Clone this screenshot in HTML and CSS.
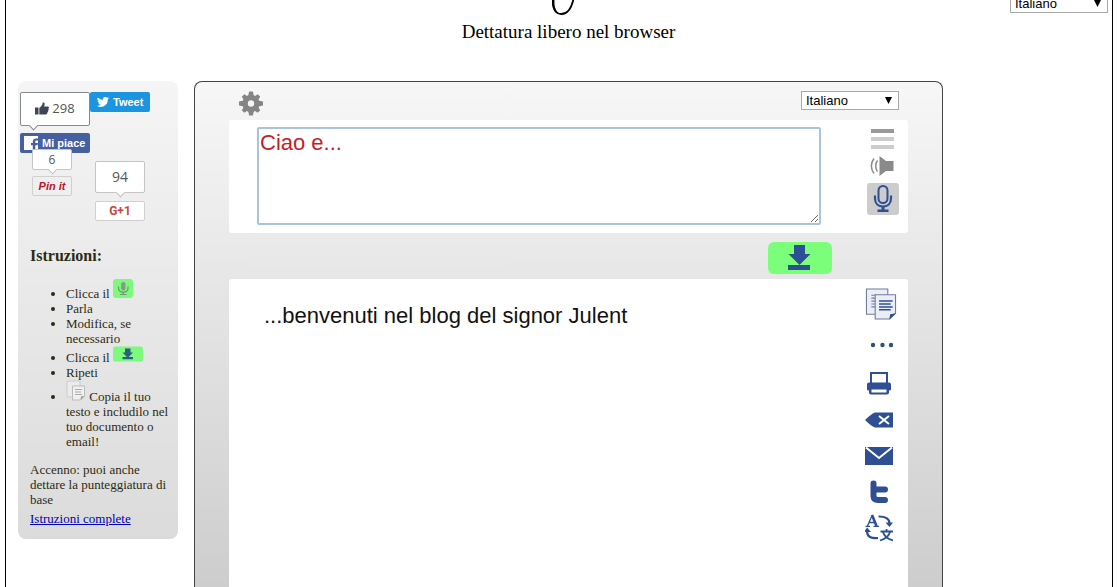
FILE: index.html
```html
<!DOCTYPE html>
<html lang="it">
<head>
<meta charset="utf-8">
<title>Dettatura libero nel browser</title>
<link rel="stylesheet" href="styles.css">
</head>
<body>
<svg class="sprite" aria-hidden="true">
  <symbol id="mic" viewBox="0 0 20 30">
    <rect x="5.5" y="2" width="9" height="17" rx="4.5" fill="none" stroke="currentColor" stroke-width="2"/>
    <path d="M2 11.500v3c0 5 3.500 8 8 8s8-3 8-8v-3" fill="none" stroke="currentColor" stroke-width="2.200"/>
    <path d="M8.500 22h3v3.500h4v2.500h-11v-2.500h4z" fill="currentColor"/>
  </symbol>
  <symbol id="down" viewBox="0 0 24 26">
    <path d="M7 0h11v9h5.500L12.500 20 1.500 9H7zM1 20h22v5H1z" fill="currentColor"/>
  </symbol>
  <symbol id="pages" viewBox="0 0 32 33">
    <path d="M1 1h22v26H1z" fill="#eceef6" stroke="#73789c" stroke-width="1.100"/>
    <path d="M6 7.500h6M6 10.500h6M6 13.500h6M6 16.500h6M6 19.500h6" stroke="#6f7db0" stroke-width="1.200"/>
    <path d="M10 7h21v19l-6 6H10z" fill="#eceef6" stroke="#73789c" stroke-width="1.100"/>
    <path d="M14 13.500h14M14 16.500h12M14 19.500h14M14 22.500h12" stroke="currentColor" stroke-width="1.600"/>
    <path d="M24.500 32.500l1-5.500 6-1z" fill="currentColor"/>
  </symbol>
</svg>
<div class="frame">
  <header class="top">
    <div class="top-logo">
      <svg class="logo" viewBox="0 0 24 16" aria-hidden="true"><path d="M2 -1C1.500 8 4 14 10.500 14c6 0 10-6 12-15" fill="none" stroke="#000" stroke-width="1.800"/><path d="M1 0c-.3 6 1 10 4 13l1-1.500C4 9 3 5 3.500 0z"/></svg>
    </div>
    <select class="lang" aria-label="Lingua del sito"><option>Italiano</option></select>
    <p class="tagline">Dettatura libero nel browser</p>
  </header>
  <div class="columns">
    <aside class="side">
      <div class="social">
        <div class="social-row">
          <div class="fb">
            <div class="count fb-count"><svg class="thumb" viewBox="0 0 14 13" aria-hidden="true"><path d="M0 5.500h3.500v7H0zM4.300 6C6.500 4.500 7.500 3 7.700.6c2-.8 2.600 1.400 1.300 4H13c1.200.2 1.200 1.500.4 2 .6.700.3 1.600-.4 1.900.4.800 0 1.500-.6 1.700.2 1-.4 2.200-1.400 2.200H4.300z"/></svg>298</div>
            <button class="fb-button" type="button"><svg class="fb-logo" viewBox="0 0 14 14" aria-hidden="true"><path d="M0 0h14v2.500h-1.500c-2.500 0-3.700 1-3.700 3V7H7v2.300h1.800V14H0zM11.300 14V9.300h2.200L14 7h-2.700V5.800c0-.8.400-1.200 1.300-1.200H14V14z" fill="#fff"/></svg>Mi piace</button>
          </div>
          <button class="tweet" type="button"><svg class="bird" viewBox="0 0 24 20" aria-hidden="true"><path d="M24 2.400a10 10 0 0 1-2.800.8A5 5 0 0 0 23.300.5a10 10 0 0 1-3.100 1.200 4.900 4.900 0 0 0-8.400 4.500A14 14 0 0 1 1.700 1 4.900 4.900 0 0 0 3.200 7.600 5 5 0 0 1 1 7v.1a4.900 4.900 0 0 0 3.900 4.800 5 5 0 0 1-2.200.1 4.900 4.900 0 0 0 4.600 3.400A10 10 0 0 1 0 17.500 14 14 0 0 0 21.500 5a10 10 0 0 0 2.500-2.600z" fill="#fff"/></svg>Tweet</button>
        </div>
        <div class="social-row second">
          <div class="pin">
            <div class="count pin-count">6</div>
            <button class="pin-button" type="button">Pin it</button>
          </div>
          <div class="plus">
            <div class="count plus-count">94</div>
            <button class="plus-button" type="button">G+1</button>
          </div>
        </div>
      </div>
      <h2 class="side-title">Istruzioni:</h2>
      <ul class="steps">
        <li>Clicca il <svg class="chip chip-mic" viewBox="0 0 20 19" aria-hidden="true"><rect width="20" height="19" rx="3" fill="#7cfa7c"/><rect x="8" y="3" width="4.500" height="8.500" rx="2.200" fill="#8a9a8a"/><path d="M5.500 7.500v1.500c0 5.500 9.500 5.500 9.500 0V7.500M10.200 13v2.500M7 15.500h6.500" fill="none" stroke="#779077" stroke-width="1.200"/></svg></li>
        <li>Parla</li>
        <li>Modifica, se necessario</li>
        <li>Clicca il <svg class="chip chip-down" viewBox="0 0 30 15" aria-hidden="true"><rect width="30" height="15" rx="2.500" fill="#7cfa7c"/><path d="M12 2h5.500v4H20l-5.200 5.500L9.500 6H12zM9.500 10.500h10.500v2.200H9.500z" fill="#2f5d80"/></svg></li>
        <li>Ripeti</li>
        <li><svg class="chip chip-pages" viewBox="0 0 20 20" aria-hidden="true"><path d="M1 .5h13v16H1z" fill="#ebebeb" stroke="#ccc"/><path d="M6.500 5.500h12v10l-4 4h-8z" fill="#f0f0f0" stroke="#bbb"/><path d="M9 9h7M9 11.500h6M9 14h7" stroke="#aaa"/><path d="M14.500 19.500l.5-3.500 3.500-.5z" fill="#999"/></svg> Copia il tuo testo e includilo nel tuo documento o email!</li>
      </ul>
      <p class="hint">Accenno: puoi anche dettare la punteggiatura di base</p>
      <a class="more" href="#istruzioni">Istruzioni complete</a>
    </aside>
    <main class="panel">
      <div class="bar">
        <button class="icon-button" type="button" aria-label="Impostazioni"><svg class="gear" viewBox="-13 -13 26 26" aria-hidden="true"><g fill="#858585"><path fill-rule="evenodd" d="M0-9a9 9 0 1 0 0 18a9 9 0 1 0 0-18zM0-3.300a3.300 3.300 0 1 1 0 6.600a3.300 3.300 0 1 1 0-6.600z"/><g id="teeth"><path d="M-2-12.500h4l1 5h-6zM-2 12.500h4l1-5h-6zM-12.500-2v4l5 1v-6zM12.500-2v4l-5 1v-6z"/></g><use href="#teeth" transform="rotate(45) scale(.94)"/></g></svg></button>
        <select class="lang" aria-label="Lingua di dettatura"><option>Italiano</option></select>
      </div>
      <section class="dictate">
        <textarea class="speech" aria-label="Testo dettato">Ciao e...</textarea>
        <div class="tools">
          <button class="icon-button" type="button" aria-label="Menu"><svg class="menu" viewBox="0 0 24 20" aria-hidden="true"><path d="M0 0h23v4H0z" fill="#999"/><path d="M0 8h23v4H0zM0 16h23v4H0z" fill="#ccc"/></svg></button>
          <button class="icon-button" type="button" aria-label="Ascolta"><svg class="menu" viewBox="0 0 24 20" aria-hidden="true"><path d="M8.500 0v20l6.500-5h7.500V5H15z" fill="#8a8a8a"/><path d="M6.500 4.500c-2.400 3-2.400 8 0 11M3 2.500c-3.500 4.500-3.500 10.500 0 15" fill="none" stroke="#8a8a8a" stroke-width="1.500"/></svg></button>
          <button class="icon-button mic-button" type="button" aria-label="Microfono"><svg class="mic" aria-hidden="true"><use href="#mic"/></svg></button>
        </div>
      </section>
      <div class="transfer">
        <button class="icon-button transfer-button" type="button" aria-label="Trasferisci il testo"><svg class="down" aria-hidden="true"><use href="#down"/></svg></button>
      </div>
      <section class="result">
        <p class="result-text">...benvenuti nel blog del signor Julent</p>
        <div class="actions">
          <button class="icon-button" type="button" aria-label="Copia"><svg class="copy" aria-hidden="true"><use href="#pages"/></svg></button>
          <button class="icon-button dots" type="button" aria-label="Altro"><svg class="act" viewBox="0 0 28 28" aria-hidden="true"><g fill="#2f4f7c"><circle cx="8" cy="14" r="2.200"/><circle cx="17.500" cy="14" r="2.200"/><circle cx="26" cy="14" r="2.200"/></g></svg></button>
          <button class="icon-button" type="button" aria-label="Stampa"><svg class="act" viewBox="0 0 28 28" aria-hidden="true"><path d="M6 14V3h16v11" fill="none" stroke="currentColor" stroke-width="2"/><path fill-rule="evenodd" d="M4 12.500h20q2 0 2 2v5q0 1-2 1v2q0 2-2 2H6q-2 0-2-2v-2q-2 0-2-1v-5q0-2 2-2zM6.500 19.500v3h15v-3z" fill="currentColor"/></svg></button>
          <button class="icon-button" type="button" aria-label="Cancella"><svg class="act" viewBox="0 0 28 28" aria-hidden="true"><path d="M0 14q6-6 10-7.500h18v15H10Q6 20 0 14z" fill="currentColor"/><path d="M14 10l10 8M24 10l-10 8" stroke="#fff" stroke-width="2"/></svg></button>
          <button class="icon-button" type="button" aria-label="Email"><svg class="act" viewBox="0 0 28 28" aria-hidden="true"><path d="M0 5h28v18H0z" fill="currentColor"/><path d="M1 5.500l13 10.500L27 5.500" fill="none" stroke="#fff" stroke-width="2"/></svg></button>
          <button class="icon-button" type="button" aria-label="Twitter"><svg class="act" viewBox="0 0 28 28" aria-hidden="true"><path d="M8.500 5.500V18q0 4 4.500 4h7M9 11.500h11" fill="none" stroke="currentColor" stroke-width="6" stroke-linecap="round"/></svg></button>
          <button class="icon-button" type="button" aria-label="Traduci"><svg class="act" viewBox="0 0 28 28" aria-hidden="true"><g fill="none" stroke="currentColor"><path d="M2.500 12L7 1.500M4 8.500h6" stroke-width="1.300"/><path d="M7 1l4.500 11" stroke-width="2.600"/><path d="M.5 12.300h4.500M8.500 12.300h5.500" stroke-width="1.300"/><path d="M13.500 2.500c7 0 11 1.500 11 7M2 17c0 6 4 7.500 11 7" stroke-width="2.200"/><path d="M15.500 17.500h12.500M21.500 15v2.500M18 18c1 4 5 7 10 8.500M25 18c-1 4-5 7-10 8.500" stroke-width="1.800"/></g><path d="M20.500 8.500h7.500l-3.500 4.500zM-1 18l3-4.500 4 4.500z" fill="currentColor"/></svg></button>
        </div>
      </section>
    </main>
  </div>
</div>
</body>
</html>
```
FILE: styles.css
```css
* { box-sizing: border-box; }

body {
  margin: 0;
  background: #fff;
  color: #000;
  font-family: "Liberation Serif", "Times New Roman", serif;
}

.sprite { position: absolute; width: 0; height: 0; }

svg { display: block; overflow: hidden; }

button { font-family: "Liberation Sans", Arial, sans-serif; padding: 0; margin: 0; }

.frame {
  display: flex;
  flex-direction: column;
  min-height: 100vh;
  margin: 0 5px;
  padding: 0 4px 0 12px;
  border: solid #000;
  border-width: 0 1px;
}

.top,
.columns {
  display: grid;
  grid-template-columns: 160px 1fr 149px;
  column-gap: 16px;
}

.top { grid-template-rows: 13px auto; }

.top-logo {
  grid-column: 2;
  display: flex;
  justify-content: center;
}

.logo { width: 24px; height: 16px; margin-right: 12px; }

.top .lang { grid-column: 3; align-self: end; justify-self: end; }

.tagline {
  grid-column: 2;
  margin: 8px 0 38px;
  font-size: 19px;
  line-height: 22px;
  text-align: center;
}

.lang {
  appearance: none;
  width: 98px;
  height: 19px;
  padding: 0 4px;
  border: 1px solid #a9a9a9;
  border-radius: 0;
  background: #fff url("data:image/svg+xml,%3Csvg xmlns='http://www.w3.org/2000/svg' width='7' height='7'%3E%3Cpath d='M0 0h7L3.500 7z'/%3E%3C/svg%3E") no-repeat right 6px center;
  color: #000;
  font: 13px "Liberation Sans", Arial, sans-serif;
}

.columns { flex: 1; }

.side {
  align-self: start;
  padding: 11px 8px 13px 12px;
  border-radius: 8px;
  background: linear-gradient(#f5f5f5, #dbdbdb);
  color: #2b2b14;
  font-size: 13px;
  line-height: 15px;
}

.social { margin: 0 0 26px -10px; }

.social-row { display: flex; align-items: flex-start; }

.second { gap: 23px; margin-top: -4px; padding-left: 12px; }

.count {
  position: relative;
  display: flex;
  align-items: center;
  justify-content: center;
  padding-bottom: 2px;
  border: 1px solid #c4c4c4;
  border-radius: 2px;
  background: #fff;
  color: #555;
  font-family: "Open Sans", sans-serif;
}

.count::after {
  content: "";
  position: absolute;
  left: 50%;
  bottom: -4px;
  width: 6px;
  height: 6px;
  margin-left: -3px;
  border: solid #c4c4c4;
  border-width: 0 1px 1px 0;
  background: #fff;
  transform: rotate(45deg);
}

.fb-count { width: 70px; height: 34px; margin-bottom: 7px; gap: 3px; border-color: #858a90; font-size: 13px; }
.fb-count::after { left: 12px; border-color: #858a90; }
.thumb { width: 14px; height: 13px; fill: #3f4652; }

.fb-button,
.tweet {
  display: flex;
  align-items: center;
  height: 20px;
  border: 0;
  border-radius: 2px;
  color: #fff;
  font-size: 11px;
  font-weight: bold;
}

.fb-button { width: 70px; gap: 4px; padding-left: 4px; background: #4460a0; }
.fb-logo { width: 14px; height: 14px; }
.tweet { width: 60px; gap: 4px; padding-left: 7px; background: #1b95e0; }
.bird { width: 12px; height: 10px; }

.pin-count { width: 40px; height: 21px; margin-bottom: 6px; padding-bottom: 0; font-size: 12px; }
.pin-button {
  width: 40px;
  height: 20px;
  border: 1px solid #d0d0d0;
  border-radius: 2px;
  background: #efefef;
  color: #b5152b;
  font-size: 11px;
  font-style: italic;
  font-weight: bold;
}

.plus { padding-top: 12px; }
.plus-count { width: 50px; height: 32px; margin-bottom: 8px; font-size: 14px; }
.plus-button {
  width: 50px;
  height: 20px;
  border: 1px solid #d0d0d0;
  border-radius: 2px;
  background: #fff;
  color: #c8473a;
  font-family: Roboto, sans-serif;
  font-size: 12px;
  font-weight: bold;
}

.side-title { margin: 0 0 14px; font-size: 16px; line-height: 18px; }

.steps { margin: 0 0 13px; padding-left: 36px; }

.chip { display: inline-block; vertical-align: baseline; }
.chip-mic { width: 20px; height: 19px; }
.chip-down { width: 30px; height: 16px; }
.chip-pages { width: 20px; height: 21px; }

.hint { margin: 0 0 4px; }

.more { display: block; color: #0000b4; }

.panel {
  display: flex;
  flex-direction: column;
  padding: 0 34px;
  border: 1px solid #444;
  border-bottom: 0;
  border-radius: 8px 8px 0 0;
  background: linear-gradient(#f7f7f7, #cdcdcd);
}

.icon-button {
  display: flex;
  align-items: center;
  justify-content: center;
  border: 0;
  background: none;
  color: #2e4f93;
}

.bar {
  display: flex;
  align-items: flex-start;
  justify-content: space-between;
  height: 38px;
  padding: 9px 9px 0;
}

.gear { width: 26px; height: 25px; }

.dictate {
  display: flex;
  align-items: flex-start;
  gap: 46px;
  padding: 7px 9px 8px 28px;
  border-radius: 3px;
  background: #fff;
}

.speech {
  flex: 1;
  height: 98px;
  padding: 1px 1px;
  border: 2px solid #a9c4d9;
  border-radius: 2px;
  outline: 0;
  color: #c81e1e;
  font: 22px/26px "Liberation Sans", Arial, sans-serif;
}

.tools {
  display: flex;
  flex-direction: column;
  align-items: center;
  gap: 7px;
  width: 32px;
  padding-top: 2px;
}

.menu { width: 26px; height: 20px; }
.mic-button { width: 32px; height: 32px; border-radius: 3px; background: #ccc; }
.mic { width: 20px; height: 30px; }

.transfer { display: flex; justify-content: flex-end; padding: 9px 76px 5px 0; }
.transfer-button { width: 64px; height: 32px; padding-right: 2px; border-radius: 6px; background: #7bff7b; }
.down { width: 24px; height: 26px; }

.result {
  flex: 1;
  display: flex;
  justify-content: space-between;
  padding: 9px 12px 0 35px;
  border-radius: 3px 3px 0 0;
  background: #fff;
}

.result-text {
  margin: 15px 0 0;
  color: #111;
  font: 22px/26px "Liberation Sans", Arial, sans-serif;
}

.actions { display: flex; flex-direction: column; align-items: flex-start; gap: 8px; width: 32px; padding-left: 1px; }
.copy { width: 32px; height: 32px; }
.dots { height: 34px; }
.act { width: 28px; height: 28px; }
```
